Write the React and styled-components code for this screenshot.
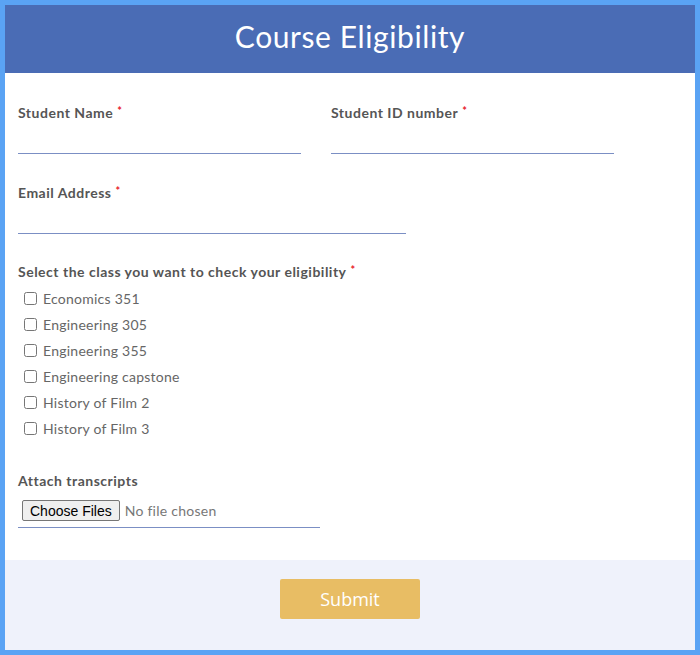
import React from 'react'
import styled, { createGlobalStyle } from 'styled-components'

const GlobalStyle = createGlobalStyle`
    html, body {
        margin: 0;
        padding: 0;
        background: #ffffff;
    }
    * {
        box-sizing: border-box;
    }
`

const Frame = styled.div`
    width: 700px;
    height: 655px;
    border: 5px solid #5aa3f4;
    display: flex;
    flex-direction: column;
    font-family: "Lato", "Open Sans", sans-serif;
    background: #ffffff;
`

const Header = styled.header`
    height: 68px;
    flex-shrink: 0;
    background-color: #4a6cb5;
    display: flex;
    align-items: center;
    justify-content: center;
    padding-bottom: 6px;

    h1 {
        margin: 0;
        font-weight: 400;
        font-size: 30px;
        color: #ffffff;
        letter-spacing: 0.6px;
    }
`

const Body = styled.div`
    flex: 1;
    padding: 31px 13px 0;
    display: flex;
    flex-direction: column;
`

const Row = styled.div`
    display: flex;
    gap: 30px;
    margin-bottom: 30px;
`

const Field = styled.div`
    width: ${(p) => p.width}px;
    display: flex;
    flex-direction: column;
    margin-bottom: ${(p) => p.gap || 0}px;
`

const Label = styled.label`
    display: block;
    font-size: 14px;
    line-height: 18px;
    font-weight: 700;
    color: #555555;
    letter-spacing: 0.5px;

    span {
        color: #e8202a;
        font-size: 11px;
        vertical-align: top;
        margin-left: 4px;
        line-height: 14px;
    }
`

const TextInput = styled.input`
    height: 32px;
    border: none;
    border-bottom: 1px solid #7b8fc4;
    outline: none;
    font-family: inherit;
    font-size: 14px;
    color: #555;
    background: transparent;
    padding: 0;
`

const CheckList = styled.div`
    display: flex;
    flex-direction: column;
    margin-top: 4px;
    padding-left: 5px;
`

const CheckRow = styled.label`
    display: flex;
    align-items: center;
    height: 26px;
    font-size: 14px;
    color: #666666;
    font-weight: 400;
    letter-spacing: 0.25px;

    input {
        margin: 0 6px 0 1px;
        width: 13px;
        height: 13px;
    }
`

const FileInput = styled.input`
    width: 302px;
    height: 38px;
    border-bottom: 1px solid #7b8fc4;
    padding: 10px 0 0 4px;
    font-family: inherit;
    font-size: 14px;
    color: #777777;
    letter-spacing: 0.25px;

    &::file-selector-button {
        font-family: "Liberation Sans", Arial, sans-serif;
        font-size: 14px;
        letter-spacing: 0;
        color: #000;
        height: 21px;
        padding: 0 7px;
        margin-right: 5px;
        border: 1px solid #767676;
        border-radius: 2px;
        background: #efefef;
    }
`

const Footer = styled.div`
    height: 90px;
    flex-shrink: 0;
    background-color: #eff2fb;
    display: flex;
    justify-content: center;
    padding-top: 19px;
`

const SubmitButton = styled.button`
    width: 140px;
    height: 40px;
    border: none;
    border-radius: 2px;
    background-color: #e8bd64;
    color: #ffffff;
    font-family: "Open Sans", sans-serif;
    font-size: 18px;
    cursor: pointer;
`

const classes = [
    'Economics 351',
    'Engineering 305',
    'Engineering 355',
    'Engineering capstone',
    'History of Film 2',
    'History of Film 3',
]

export default function App() {
    return (
        <>
            <GlobalStyle />
            <Frame>
                <Header>
                    <h1>Course Eligibility</h1>
                </Header>
                <Body>
                    <Row>
                        <Field width={283}>
                            <Label>Student Name<span>*</span></Label>
                            <TextInput type="text" />
                        </Field>
                        <Field width={283}>
                            <Label>Student ID number<span>*</span></Label>
                            <TextInput type="text" />
                        </Field>
                    </Row>
                    <Field width={388} gap={29}>
                        <Label>Email Address<span>*</span></Label>
                        <TextInput type="email" />
                    </Field>
                    <Field width={600} gap={31}>
                        <Label>Select the class you want to check your eligibility<span>*</span></Label>
                        <CheckList>
                            {classes.map((c) => (
                                <CheckRow key={c}>
                                    <input type="checkbox" />
                                    {c}
                                </CheckRow>
                            ))}
                        </CheckList>
                    </Field>
                    <Field width={302}>
                        <Label>Attach transcripts</Label>
                        <FileInput type="file" multiple />
                    </Field>
                </Body>
                <Footer>
                    <SubmitButton>Submit</SubmitButton>
                </Footer>
            </Frame>
        </>
    )
}
